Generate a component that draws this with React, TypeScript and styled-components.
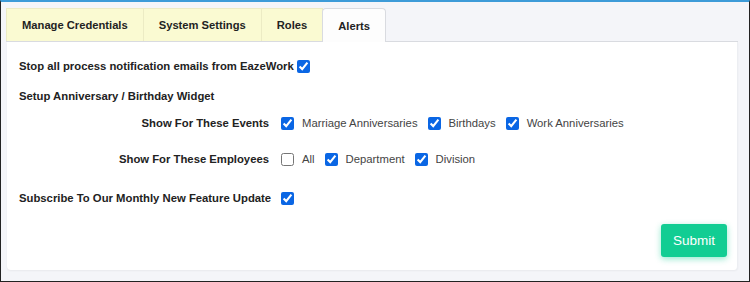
import React, { useState } from "react";
import styled, { createGlobalStyle } from "styled-components";

const GlobalStyle = createGlobalStyle`
    body {
        margin: 0;
        font-family: "Liberation Sans", Arial, sans-serif;
    }
    * { box-sizing: border-box; }
`;

const Frame = styled.div`
    width: 750px;
    height: 282px;
    background-color: #f4f5f9;
    border: 1px solid #222;
    border-top: 2px solid #3d9bd8;
    padding: 6px 11px 11px 5px;
    display: flex;
    flex-direction: column;
`;

const TabBar = styled.div`
    display: flex;
    height: 34px;
    border-bottom: 1px solid #d9dbe0;
`;

const Tab = styled.div<{ $active?: boolean }>`
    display: flex;
    align-items: center;
    justify-content: center;
    padding: 0 15px;
    height: ${(p) => (p.$active ? "34px" : "33px")};
    font-size: 11.2px;
    font-weight: bold;
    color: #222;
    background-color: ${(p) => (p.$active ? "#fdfdfd" : "#fafad2")};
    border: 1px solid ${(p) => (p.$active ? "#d9dbe0" : "#ecebc4")};
    border-bottom: none;
    border-radius: ${(p) => (p.$active ? "4px 4px 0 0" : "0")};
    margin-right: ${(p) => (p.$active ? "0" : "-1px")};
    margin-bottom: ${(p) => (p.$active ? "-1px" : "0")};
    cursor: pointer;
    user-select: none;
`;

const Panel = styled.div`
    flex: 1;
    margin-left: 1px;
    background-color: #fff;
    border-radius: 0 0 4px 4px;
    box-shadow: 0 1px 2px rgba(0, 0, 0, 0.05);
    border-right: 1px solid #eceef2;
    padding: 16px 10px 13px 12px;
    display: flex;
    flex-direction: column;
`;

const Row = styled.div<{ $top?: number }>`
    display: flex;
    align-items: center;
    height: 16px;
    margin-top: ${(p) => p.$top ?? 0}px;
    font-size: 11.3px;
    color: #222;
`;

const Heading = styled.span`
    font-weight: bold;
    color: #222;
`;

const FieldLabel = styled.span<{ $align?: string }>`
    width: 250px;
    font-weight: bold;
    text-align: ${(p) => p.$align ?? "right"};
    margin-right: 12px;
    white-space: nowrap;
`;

const Check = styled.input.attrs({ type: "checkbox" })<{ $gap?: number }>`
    width: 13px;
    height: 13px;
    margin: 0 0 0 ${(p) => p.$gap ?? 0}px;
    accent-color: #0a66e4;
`;

const Option = styled.label`
    display: flex;
    align-items: center;
    margin-right: 10px;
    color: #444;
    cursor: pointer;

    span {
        margin-left: 8px;
    }
`;

const Footer = styled.div`
    display: flex;
    justify-content: flex-end;
    margin-top: 18px;
`;

const SubmitButton = styled.button`
    width: 66px;
    height: 33px;
    border: none;
    border-radius: 3px;
    background-color: #12cd93;
    color: #fff;
    font-family: "Liberation Sans", Arial, sans-serif;
    font-size: 13.5px;
    box-shadow: 0 2px 6px rgba(18, 205, 147, 0.45);
    cursor: pointer;
`;

const tabs = ["Manage Credentials", "System Settings", "Roles", "Alerts"];

const App = () => {
    const [activeTab, setActiveTab] = useState("Alerts");
    const [values, setValues] = useState<Record<string, boolean>>({
        stopEmails: true,
        marriage: true,
        birthdays: true,
        work: true,
        all: false,
        department: true,
        division: true,
        subscribe: true,
    });
    const toggle = (key: string) => setValues({ ...values, [key]: !values[key] });

    return (
        <>
            <GlobalStyle />
            <Frame>
                <TabBar>
                    {tabs.map((t) => (
                        <Tab key={t} $active={activeTab === t} onClick={() => setActiveTab(t)}>
                            {t}
                        </Tab>
                    ))}
                </TabBar>
                <Panel>
                    <Row>
                        <Heading>Stop all process notification emails from EazeWork</Heading>
                        <Check $gap={3} checked={values.stopEmails} onChange={() => toggle("stopEmails")} />
                    </Row>
                    <Row $top={14}>
                        <Heading>Setup Anniversary / Birthday Widget</Heading>
                    </Row>
                    <Row $top={11}>
                        <FieldLabel>Show For These Events</FieldLabel>
                        <Option>
                            <Check checked={values.marriage} onChange={() => toggle("marriage")} />
                            <span>Marriage Anniversaries</span>
                        </Option>
                        <Option>
                            <Check checked={values.birthdays} onChange={() => toggle("birthdays")} />
                            <span>Birthdays</span>
                        </Option>
                        <Option>
                            <Check checked={values.work} onChange={() => toggle("work")} />
                            <span>Work Anniversaries</span>
                        </Option>
                    </Row>
                    <Row $top={20}>
                        <FieldLabel>Show For These Employees</FieldLabel>
                        <Option>
                            <Check checked={values.all} onChange={() => toggle("all")} />
                            <span>All</span>
                        </Option>
                        <Option>
                            <Check checked={values.department} onChange={() => toggle("department")} />
                            <span>Department</span>
                        </Option>
                        <Option>
                            <Check checked={values.division} onChange={() => toggle("division")} />
                            <span>Division</span>
                        </Option>
                    </Row>
                    <Row $top={23}>
                        <FieldLabel $align="left">Subscribe To Our Monthly New Feature Update</FieldLabel>
                        <Check checked={values.subscribe} onChange={() => toggle("subscribe")} />
                    </Row>
                    <Footer>
                        <SubmitButton>Submit</SubmitButton>
                    </Footer>
                </Panel>
            </Frame>
        </>
    );
};

export default App;
